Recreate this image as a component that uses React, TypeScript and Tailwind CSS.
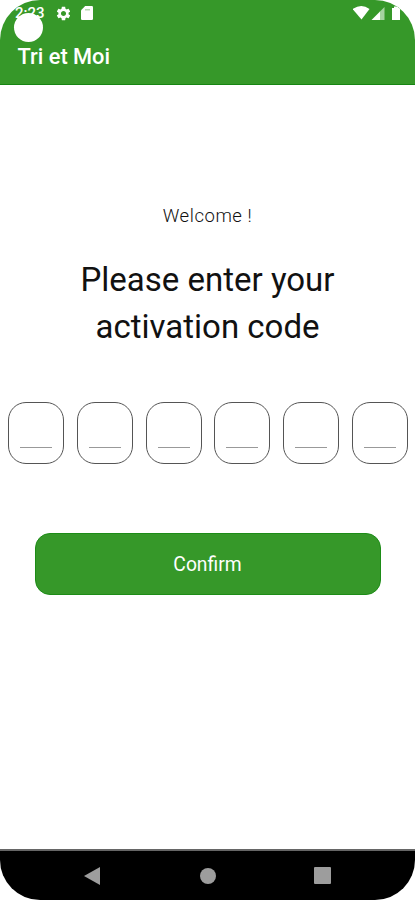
import { useRef } from "react";

const CODE_LENGTH = 6;

const StatusBar = () => {
    return (
        <div className="relative flex h-[26px] items-center justify-between pl-[15px] pr-[14px] text-white">
            <div className="flex h-full items-center">
                <span className="w-[31px] text-[15px] leading-[27px] font-medium">2:23</span>
                <svg className="ml-[9px] h-[17px] w-[17px]" viewBox="0 0 24 24" fill="currentColor">
                    <path d="M19.14 12.94c.04-.3.06-.61.06-.94 0-.32-.02-.64-.07-.94l2.03-1.58c.18-.14.23-.41.12-.61l-1.92-3.32c-.12-.22-.37-.29-.59-.22l-2.39.96c-.5-.38-1.03-.7-1.62-.94l-.36-2.54c-.04-.24-.24-.41-.48-.41h-3.84c-.24 0-.43.17-.47.41l-.36 2.54c-.59.24-1.13.57-1.62.94l-2.39-.96c-.22-.08-.47 0-.59.22L2.74 8.87c-.12.21-.08.47.12.61l2.03 1.58c-.05.3-.09.63-.09.94s.02.64.07.94l-2.03 1.58c-.18.14-.23.41-.12.61l1.92 3.32c.12.22.37.29.59.22l2.39-.96c.5.38 1.03.7 1.62.94l.36 2.54c.05.24.24.41.48.41h3.84c.24 0 .44-.17.47-.41l.36-2.54c.59-.24 1.13-.56 1.62-.94l2.39.96c.22.08.47 0 .59-.22l1.92-3.32c.12-.22.07-.47-.12-.61l-2.01-1.58zM12 15.6c-1.98 0-3.6-1.62-3.6-3.6s1.62-3.6 3.6-3.6 3.6 1.62 3.6 3.6-1.62 3.6-3.6 3.6z" />
                </svg>
                <svg className="ml-[9px] h-[14px] w-[12px]" viewBox="0 0 12 14" fill="currentColor">
                    <path d="M4.2 0H10.8Q12 0 12 1.2V12.8Q12 14 10.8 14H1.2Q0 14 0 12.8V4.2Z" />
                    <path d="M4 3H9V4.5H4Z" fill="#b5dab0" />
                </svg>
            </div>
            <svg className="h-[16px] w-[48px]" viewBox="0 0 48 16">
                <path d="M-.5 4Q8.5-1.8 16.5 4L8.5 14.5Z" fill="#fff" />
                <path d="M18.5 15L27 6.5V15Z" fill="#fff" />
                <path d="M27 6.5L31.5 2V15H27Z" fill="#a5d3a0" />
                <path d="M39 3H41V1.5H45V3H47V15H39Z" fill="#fff" />
            </svg>
            {/* camera cutout */}
            <div className="absolute left-[14px] top-[13px] h-[29px] w-[29px] rounded-full bg-white" />
        </div>
    );
};

const App = () => {
    const inputs = useRef<(HTMLInputElement | null)[]>([]);

    const onChangeHandle = (index: number, value: string) => {
        if (value && index < CODE_LENGTH - 1) {
            inputs.current[index + 1]?.focus();
        }
    };

    return (
        <div className="flex h-[900px] w-[415px] flex-col overflow-hidden rounded-[40px] bg-white font-['Roboto',sans-serif]">
            <header className="h-[85px] border-b border-[#168512] bg-[#369829]">
                <StatusBar />
                <h1 className="mt-[15px] pl-[17.5px] text-[21.8px] leading-[32px] font-medium text-white">Tri et Moi</h1>
            </header>

            <main className="flex flex-1 flex-col items-center">
                <p className="mt-[118px] text-[18.5px] leading-[26px] font-light tracking-[0.55px] text-[#111]">Welcome !</p>
                <h2 className="mt-[27px] w-[300px] text-center text-[33px] leading-[47px] text-[#111]">
                    Please enter your activation code
                </h2>
                <div className="mt-[52px] flex w-full justify-between pl-[8px] pr-[7px]">
                    {Array.from({ length: CODE_LENGTH }).map((_, index) => (
                        <div key={index} className="h-[62px] w-[56px] rounded-[18px] border border-[#555] px-[11px]">
                            <input
                                ref={(el) => { inputs.current[index] = el; }}
                                maxLength={1}
                                onChange={(e) => onChangeHandle(index, e.target.value)}
                                className="h-[45px] w-full border-b border-[#999] text-center text-xl outline-none"
                            />
                        </div>
                    ))}
                </div>
                <button className="mt-[69px] h-[62px] w-[346px] rounded-[15px] border border-[#1d8c17] bg-[#369829] pt-[3px] text-[19.3px] text-white">
                    Confirm
                </button>
            </main>

            <nav className="flex h-[51px] items-center border-t-2 border-[#666] bg-black">
                <svg className="ml-[84px] h-[18px] w-[16px]" viewBox="0 0 16 18" fill="#9d9d9d">
                    <path d="M0 9L16 0V18Z" />
                </svg>
                <div className="ml-[100px] h-[16px] w-[16px] rounded-full bg-[#9d9d9d]" />
                <div className="ml-[98px] h-[17px] w-[17px] rounded-[1px] bg-[#9d9d9d]" />
            </nav>
        </div>
    );
};

export default App;
